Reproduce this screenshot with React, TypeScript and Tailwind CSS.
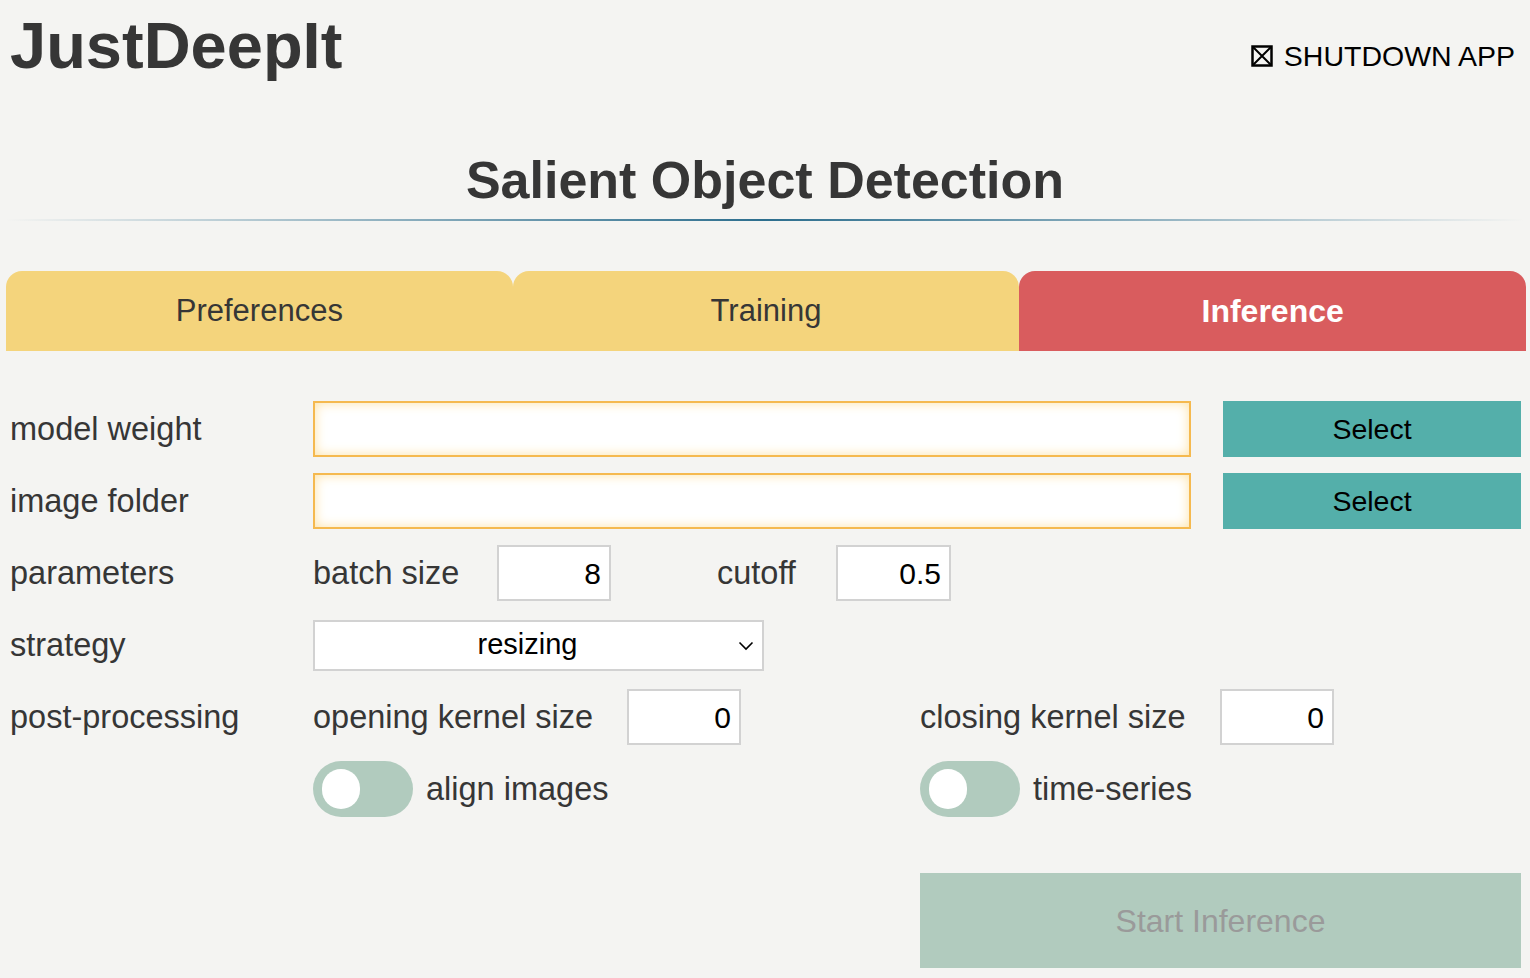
import React from 'react'

function Toggle({ label }: { label: string }) {
  return (
    <div className="flex items-center">
      <div className="w-[100px] h-[56px] rounded-full bg-[#b1cbbe] flex items-center pl-[9px]">
        <div className="w-[38px] h-[40px] rounded-full bg-white" />
      </div>
      <span className="ml-[13px]">{label}</span>
    </div>
  )
}

function NumberBox({ value, width }: { value: string; width: string }) {
  return (
    <div className={`${width} h-[56px] border-2 border-[#d2d2d2] bg-white flex items-center justify-end pr-[8px] text-[30px] text-black`}>
      {value}
    </div>
  )
}

export default function App() {
  return (
    <div className="min-h-screen bg-[#f4f4f2] text-[#363636] font-['Liberation_Sans',Arial,sans-serif] overflow-hidden">
      {/* header */}
      <div className="flex justify-between pl-[10px] pr-[15px]">
        <h1 className="pt-[13px] text-[65px] leading-none font-bold">JustDeepIt</h1>
        <button className="mt-[42px] flex items-center gap-[11px] text-[28.5px] leading-none text-black self-start">
          <svg width="22" height="22" viewBox="0 0 22 22" aria-hidden="true">
            <rect x="1.5" y="1.5" width="19" height="19" fill="none" stroke="black" strokeWidth="2.5" />
            <path d="M2 2L20 20M20 2L2 20" stroke="black" strokeWidth="2" />
          </svg>
          SHUTDOWN APP
        </button>
      </div>

      {/* page title */}
      <h2 className="mt-[76px] text-center text-[52px] leading-none font-bold">Salient Object Detection</h2>
      <div className="mt-[13px] mx-[5px] h-[2px] bg-linear-to-r from-transparent via-[#2c6e8e] to-transparent" />

      {/* tabs */}
      <div className="mt-[50px] ml-[6px] mr-[4px] grid grid-cols-3 h-[80px] text-[31px]">
        <div className="rounded-t-[16px] bg-[#f4d47c] flex items-center justify-center">Preferences</div>
        <div className="rounded-t-[16px] bg-[#f4d47c] flex items-center justify-center">Training</div>
        <div className="rounded-t-[16px] bg-[#d95c5e] flex items-center justify-center font-bold text-white text-[32px]">Inference</div>
      </div>

      {/* form */}
      <div className="mt-[50px] pl-[10px] flex flex-col gap-y-[16px] text-[32.5px]">
        <div className="flex items-center h-[56px]">
          <span className="w-[303px]">model weight</span>
          <div className="w-[878px] h-full border-2 border-[#f5b94f] bg-white shadow-[inset_0_0_12px_#fde2a6]" />
          <button className="ml-[32px] w-[298px] h-full bg-[#54afaa] text-black text-[28.5px]">Select</button>
        </div>
        <div className="flex items-center h-[56px]">
          <span className="w-[303px]">image folder</span>
          <div className="w-[878px] h-full border-2 border-[#f5b94f] bg-white shadow-[inset_0_0_12px_#fde2a6]" />
          <button className="ml-[32px] w-[298px] h-full bg-[#54afaa] text-black text-[28.5px]">Select</button>
        </div>
        <div className="flex items-center h-[56px]">
          <span className="w-[303px]">parameters</span>
          <span className="w-[184px]">batch size</span>
          <NumberBox value="8" width="w-[114px]" />
          <span className="ml-[106px] w-[119px]">cutoff</span>
          <NumberBox value="0.5" width="w-[115px]" />
        </div>
        <div className="flex items-center h-[56px]">
          <span className="w-[303px]">strategy</span>
          <div className="relative w-[451px] h-[51px] border-2 border-[#d2d2d2] bg-white flex items-center justify-center pr-[22px] text-[29px] text-black">
            resizing
            <svg className="absolute right-[8px] top-[19px]" width="16" height="10" viewBox="0 0 16 10" aria-hidden="true">
              <path d="M1.5 1.5L8 8L14.5 1.5" fill="none" stroke="black" strokeWidth="1.6" />
            </svg>
          </div>
        </div>
        <div className="flex items-center h-[56px]">
          <span className="w-[303px]">post-processing</span>
          <span className="w-[314px]">opening kernel size</span>
          <NumberBox value="0" width="w-[114px]" />
          <span className="ml-[179px] w-[300px]">closing kernel size</span>
          <NumberBox value="0" width="w-[114px]" />
        </div>
        <div className="flex items-center h-[56px]">
          <span className="w-[303px]" />
          <div className="w-[607px]">
            <Toggle label="align images" />
          </div>
          <Toggle label="time-series" />
        </div>
      </div>

      <div className="mt-[56px] pl-[920px]">
        <button className="w-[601px] h-[95px] bg-[#b1cbbe] text-[#9a9a9a] text-[32px]">Start Inference</button>
      </div>
    </div>
  )
}
